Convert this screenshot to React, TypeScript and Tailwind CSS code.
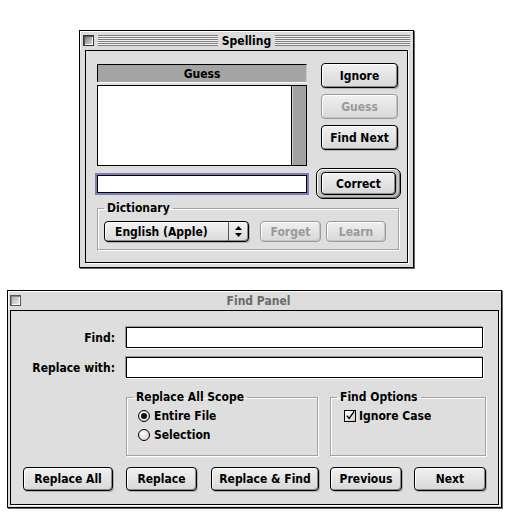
import type { ReactNode } from "react";

// Mac OS 8 "Platinum" look: Spelling dialog + Find Panel

function CloseBox({ active }: { active: boolean }) {
  return (
    <div
      className={`w-[11px] h-[11px] shrink-0 border ${
        active
          ? "border-[#333] bg-[linear-gradient(135deg,#777,#ddd)] shadow-[inset_1px_1px_0_#555,inset_-1px_-1px_0_#fff]"
          : "border-[#555] bg-[linear-gradient(135deg,#aaa,#eee)] shadow-[inset_1px_1px_0_#888,inset_-1px_-1px_0_#fff]"
      }`}
    />
  );
}

function Stripes() {
  return (
    <div className="flex-1 h-[11px] bg-[repeating-linear-gradient(to_bottom,#7d7d7d_0px,#7d7d7d_1px,#f4f4f4_1px,#f4f4f4_2px)]" />
  );
}

function TitleBar({ title, active }: { title: string; active: boolean }) {
  if (!active) {
    return (
      <div className="h-[19px] flex items-center pl-[2px] pr-[5px] bg-[#dcdcdc] shadow-[inset_1px_1px_0_#fff]">
        <CloseBox active={false} />
        <span className="flex-1 text-center text-[12px] leading-none font-bold text-[#6a6a6a]">{title}</span>
      </div>
    );
  }
  return (
    <div className="h-[19px] grid grid-cols-[1fr_auto_1fr] items-center pl-[3px] pr-[3px] bg-[#dcdcdc] shadow-[inset_1px_1px_0_#fff]">
      <div className="flex items-center gap-[4px]">
        <CloseBox active />
        <Stripes />
      </div>
      <span className="px-[4px] text-[12px] leading-none font-bold text-black">{title}</span>
      <div className="flex items-center">
        <Stripes />
      </div>
    </div>
  );
}

function Btn({
  children,
  className,
  disabled,
}: {
  children: ReactNode;
  className: string;
  disabled?: boolean;
}) {
  return (
    <div
      className={`shrink-0 flex items-center justify-center rounded-[4px] border text-[12px] font-bold bg-[linear-gradient(to_bottom,#f0f0f0,#d8d8d8)] ${
        disabled
          ? "border-[#9a9a9a] text-[#9a9a9a] shadow-[inset_1px_1px_0_#fff,inset_-1px_-1px_0_#c4c4c4]"
          : "border-black text-black shadow-[inset_1px_1px_0_#fff,inset_-1px_-1px_0_#8a8a8a,1px_1px_0_#b0b0b0]"
      } ${className}`}
    >
      {children}
    </div>
  );
}

function Group({ label, className, children }: { label: string; className: string; children: ReactNode }) {
  return (
    <fieldset className={`border border-[#a2a2a2] shadow-[inset_1px_1px_0_#fff,1px_1px_0_#fff] ${className}`}>
      <legend className="ml-[6px] px-[3px] text-[12px] leading-[14px] font-bold text-black">{label}</legend>
      {children}
    </fieldset>
  );
}

function Radio({ checked, label }: { checked: boolean; label: string }) {
  return (
    <div className="flex items-center gap-[4px] h-[19px]">
      <div className="w-[12px] h-[12px] rounded-full border border-black bg-[radial-gradient(circle_at_35%_35%,#fff,#c8c8c8)] flex items-center justify-center">
        {checked && <div className="w-[6px] h-[6px] rounded-full bg-[#111]" />}
      </div>
      <span className="text-[12px] font-bold text-black">{label}</span>
    </div>
  );
}

function TextField({ className }: { className: string }) {
  return <div className={`border border-black bg-white shadow-[1px_1px_0_#fff,-1px_-1px_0_#999] ${className}`} />;
}

export default function App() {
  return (
    <div className="min-h-screen bg-white font-['Charcoal','DejaVu_Sans_Condensed','DejaVu_Sans',sans-serif] pt-[30px]">
      {/* Spelling */}
      <div className="ml-[79px] w-[335px] border border-black bg-[#dcdcdc] shadow-[1px_1px_0_#666]">
        <TitleBar title="Spelling" active />
        <div className="px-[5px] pb-[4px]">
          <div className="border border-black bg-[#dedede] shadow-[1px_1px_0_#fff] pt-[13px] pb-[12px]">
            <div className="flex items-start">
              <div className="ml-[11px] w-[210px]">
                <div className="h-[18px] flex items-center justify-center bg-[#a4a4a4] border-t border-l border-black border-r border-r-[#ccc] text-[12px] font-bold text-black shadow-[0_1px_0_#fff]">
                  Guess
                </div>
                <div className="mt-[3px] h-[81px] flex border border-black bg-white">
                  <div className="flex-1" />
                  <div className="w-[15px] border-l border-black bg-[#a2a2a2] shadow-[inset_1px_0_0_#c8c8c8]" />
                </div>
              </div>
              <div className="ml-[14px] -mt-[1px] flex flex-col gap-[6px]">
                <Btn className="w-[77px] h-[25px]">Ignore</Btn>
                <Btn className="w-[77px] h-[25px]" disabled>
                  Guess
                </Btn>
                <Btn className="w-[77px] h-[25px]">Find Next</Btn>
              </div>
            </div>

            <div className="mt-[2px] flex items-center">
              <div className="ml-[9px] w-[214px] h-[22px] border-2 border-[#7d7bbb] shadow-[inset_0_0_0_1px_#000] bg-white" />
              <div className="ml-[7px] w-[85px] h-[31px] rounded-[7px] border border-black py-[3px] px-[4px] bg-[#c4c4c4] shadow-[inset_1px_1px_0_#fff,inset_-1px_-1px_0_#777]">
                <Btn className="w-[75px] h-[23px]">Correct</Btn>
              </div>
            </div>

            <Group label="Dictionary" className="mt-[2px] ml-[11px] w-[302px]">
              <div className="flex items-center pl-[6px] pt-[6px] pb-[7px]">
                <div className="w-[145px] h-[21px] flex items-stretch rounded-[4px] border border-black bg-[linear-gradient(to_bottom,#f2f2f2,#dadada)] shadow-[inset_1px_1px_0_#fff,inset_-1px_-1px_0_#8a8a8a,1px_1px_0_#b0b0b0]">
                  <span className="flex-1 flex items-center pl-[10px] text-[12px] font-bold text-black">English (Apple)</span>
                  <div className="w-[20px] border-l border-[#555] flex items-center justify-center">
                    <svg width="7" height="11" viewBox="0 0 7 11">
                      <path d="M3.5 0 L7 4 L0 4 Z" fill="#000" />
                      <path d="M0 7 L7 7 L3.5 11 Z" fill="#000" />
                    </svg>
                  </div>
                </div>
                <Btn className="ml-[11px] w-[61px] h-[21px]" disabled>
                  Forget
                </Btn>
                <Btn className="ml-[5px] w-[60px] h-[21px]" disabled>
                  Learn
                </Btn>
              </div>
            </Group>
          </div>
        </div>
      </div>

      {/* Find Panel */}
      <div className="mt-[22px] ml-[7px] w-[495px] border border-black bg-[#dcdcdc] shadow-[1px_1px_0_#666]">
        <TitleBar title="Find Panel" active={false} />
        <div className="px-[2px] pb-[2px]">
          <div className="border border-black bg-[#dedede] shadow-[1px_1px_0_#fff] pt-[16px] pb-[13px]">
            <div className="flex items-center">
              <span className="w-[104px] text-right text-[12px] font-bold text-black">Find:</span>
              <TextField className="ml-[11px] w-[357px] h-[21px]" />
            </div>
            <div className="mt-[9px] flex items-center">
              <span className="w-[104px] text-right text-[12px] font-bold text-black">Replace with:</span>
              <TextField className="ml-[11px] w-[357px] h-[21px]" />
            </div>

            <div className="mt-[12px] flex items-start">
              <Group label="Replace All Scope" className="ml-[115px] w-[192px] h-[66px]">
                <div className="pl-[11px] pt-[2px]">
                  <Radio checked label="Entire File" />
                  <Radio checked={false} label="Selection" />
                </div>
              </Group>
              <Group label="Find Options" className="ml-[12px] w-[156px] h-[66px]">
                <div className="pl-[13px] pt-[2px] flex items-center gap-[3px] h-[21px]">
                  <div className="w-[12px] h-[12px] border border-black bg-[linear-gradient(135deg,#fff,#cfcfcf)] flex items-center justify-center">
                    <svg width="12" height="12" viewBox="0 0 12 12">
                      <path d="M2 5.5 L5 9 L11 0.5" stroke="#000" strokeWidth="1.6" fill="none" />
                    </svg>
                  </div>
                  <span className="text-[12px] font-bold text-black">Ignore Case</span>
                </div>
              </Group>
            </div>

            <div className="mt-[11px] flex items-center">
              <Btn className="ml-[12px] w-[90px] h-[24px]">Replace All</Btn>
              <Btn className="ml-[13px] w-[71px] h-[24px]">Replace</Btn>
              <Btn className="ml-[14px] w-[108px] h-[24px]">Replace &amp; Find</Btn>
              <Btn className="ml-[11px] w-[72px] h-[24px]">Previous</Btn>
              <Btn className="ml-[12px] w-[72px] h-[24px]">Next</Btn>
            </div>
          </div>
        </div>
      </div>
    </div>
  );
}
